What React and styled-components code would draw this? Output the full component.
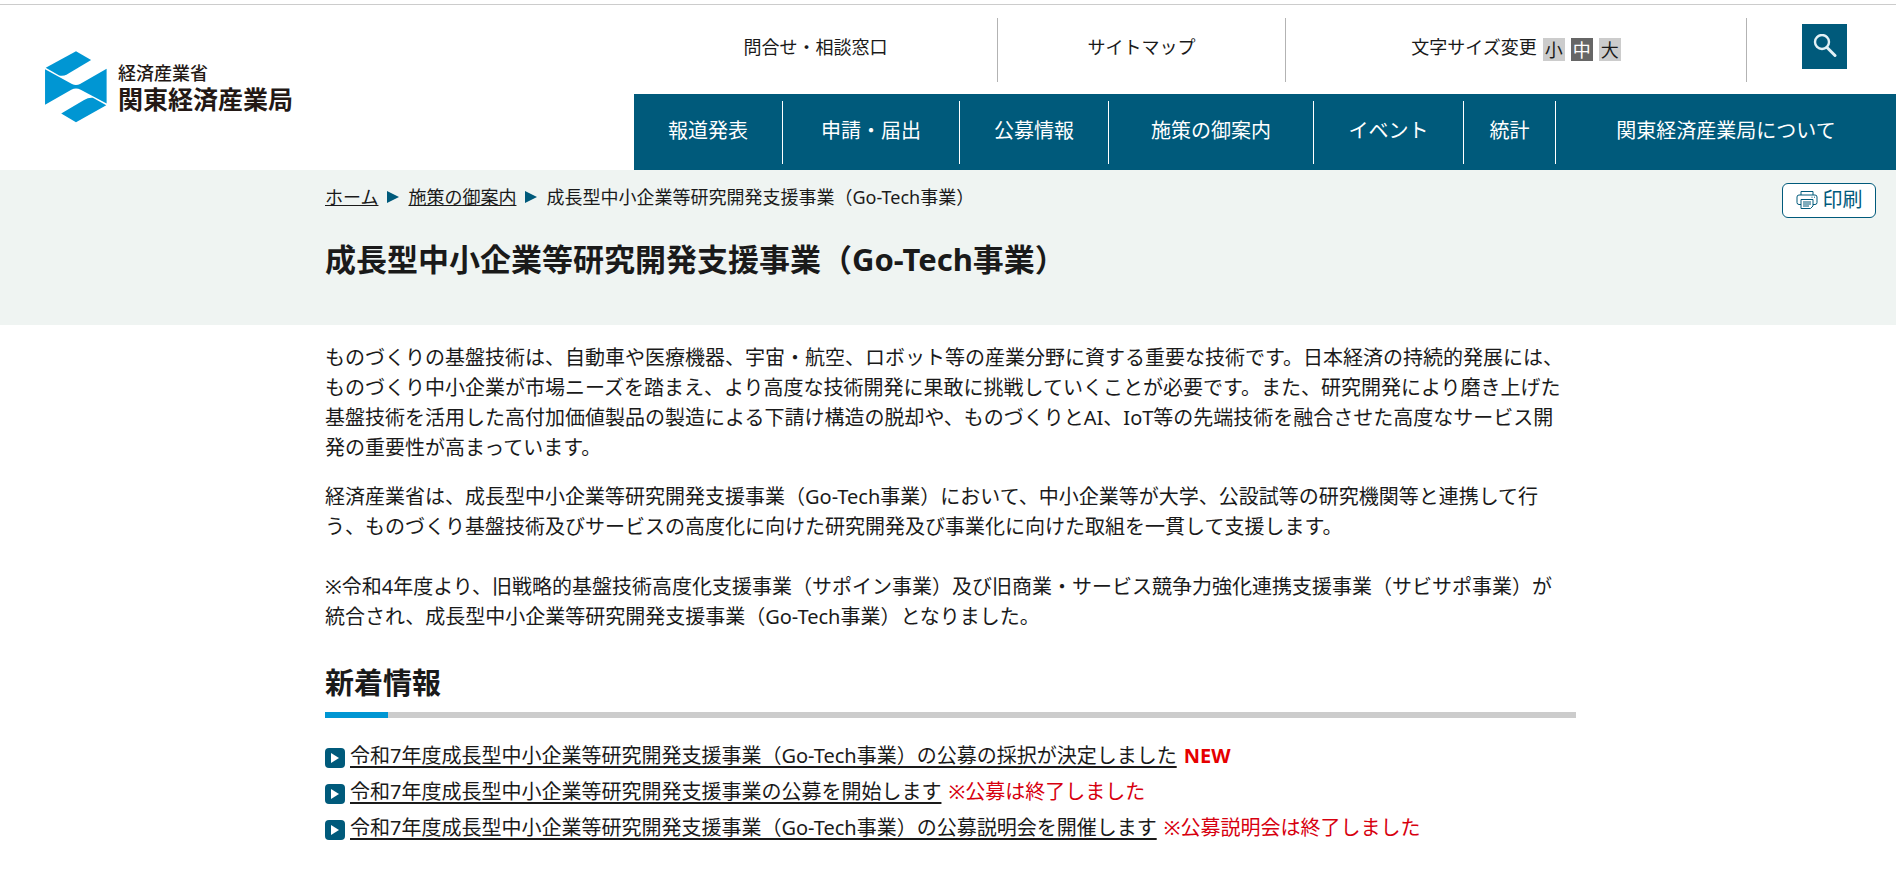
import React from 'react'
import styled, { createGlobalStyle } from 'styled-components';

const navItems = ['報道発表', '申請・届出', '公募情報', '施策の御案内', 'イベント', '統計', '関東経済産業局について'];

const sizes = [
    { label: '小' },
    { label: '中', active: true },
    { label: '大' },
];

const news = [
    { title: '令和7年度成長型中小企業等研究開発支援事業（Go-Tech事業）の公募の採択が決定しました', note: 'NEW', strong: true },
    { title: '令和7年度成長型中小企業等研究開発支援事業の公募を開始します', note: '※公募は終了しました' },
    { title: '令和7年度成長型中小企業等研究開発支援事業（Go-Tech事業）の公募説明会を開催します', note: '※公募説明会は終了しました' },
];

function LogoMark() {
    return (
        <svg width="62" height="72" viewBox="0 0 184 214" fill="#0096d3" aria-hidden="true">
            <path d="M2 50 L92 1 L137 27 L66 69 Q54 76 42 73 Z" />
            <path d="M0 54 L80 98 Q92 104 104 98 L183 53 L183 156 L106 115 Q92 108 78 115 L0 160 Z" />
            <path d="M182 161 L92 212 L48 186 L116 146 Q130 137 142 139 Z" />
        </svg>
    )
}

function SearchIcon() {
    return (
        <svg width="24" height="24" viewBox="0 0 24 24" fill="none" stroke="#e3f1f6" aria-hidden="true">
            <circle cx="9" cy="8" r="7" strokeWidth="2.4" />
            <path d="M14 13.5 L22 21.5" strokeWidth="3" strokeLinecap="round" />
        </svg>
    )
}

function PrinterIcon() {
    return (
        <svg width="22" height="20" viewBox="0 0 22 20" fill="none" stroke="#005a7b" aria-hidden="true">
            <path d="M5 5 V1.5 H17 V5" />
            <path d="M5 14.5 H3 Q1 14.5 1 12.5 V7 Q1 5 3 5 H19 Q21 5 21 7 V12.5 Q21 14.5 19 14.5 H17" />
            <path d="M5 18.5 V9.5 H17 V16 L14.5 18.5 Z" fill="#fff" />
            <path d="M7 12 H15 M7 14 H15 M7 16 H13 M15.5 7.2 H16.5 M18 7.2 H19" />
        </svg>
    )
}

function Header() {
    return (
        <HeaderWrapper>
            <Logo href="#">
                <LogoMark />
                <LogoText>
                    <small>経済産業省</small>
                    <strong>関東経済産業局</strong>
                </LogoText>
            </Logo>
            <Menus>
                <SubMenu>
                    <SubCell><a href="#contact">問合せ・相談窓口</a></SubCell>
                    <SubCell><a href="#sitemap">サイトマップ</a></SubCell>
                    <SubCell>
                        <span>文字サイズ変更</span>
                        {sizes.map((size) => (
                            <SizeButton key={size.label} type="button" $active={size.active}>{size.label}</SizeButton>
                        ))}
                    </SubCell>
                    <SubCell>
                        <SearchButton type="button" aria-label="検索"><SearchIcon /></SearchButton>
                    </SubCell>
                </SubMenu>
                <MainNav>
                    {navItems.map((item) => <a key={item} href="#nav">{item}</a>)}
                </MainNav>
            </Menus>
        </HeaderWrapper>
    )
}

export default function App() {
    return (
        <>
            <GlobalStyle />
            <Header />
            <TitleBand>
                <PrintButton type="button"><PrinterIcon />印刷</PrintButton>
                <Breadcrumb>
                    <a href="#home">ホーム</a>
                    <Arrow />
                    <a href="#policy">施策の御案内</a>
                    <Arrow />
                    <span>成長型中小企業等研究開発支援事業（Go-Tech事業）</span>
                </Breadcrumb>
                <h1>成長型中小企業等研究開発支援事業（Go-Tech事業）</h1>
            </TitleBand>
            <Content>
                <p>ものづくりの基盤技術は、自動車や医療機器、宇宙・航空、ロボット等の産業分野に資する重要な技術です。日本経済の持続的発展には、ものづくり中小企業が市場ニーズを踏まえ、より高度な技術開発に果敢に挑戦していくことが必要です。また、研究開発により磨き上げた基盤技術を活用した高付加価値製品の製造による下請け構造の脱却や、ものづくりとAI、IoT等の先端技術を融合させた高度なサービス開発の重要性が高まっています。</p>
                <p>
                    経済産業省は、成長型中小企業等研究開発支援事業（Go-Tech事業）において、中小企業等が大学、公設試等の研究機関等と連携して行う、ものづくり基盤技術及びサービスの高度化に向けた研究開発及び事業化に向けた取組を一貫して支援します。
                    <br /><br />
                    ※令和4年度より、旧戦略的基盤技術高度化支援事業（サポイン事業）及び旧商業・サービス競争力強化連携支援事業（サビサポ事業）が統合され、成長型中小企業等研究開発支援事業（Go-Tech事業）となりました。
                </p>
                <h2>新着情報</h2>
                <NewsList>
                    {news.map((item) => (
                        <li key={item.title}>
                            <Bullet />
                            <a href="#news">{item.title}</a>
                            <Note $strong={item.strong}>{item.note}</Note>
                        </li>
                    ))}
                </NewsList>
            </Content>
        </>
    )
}

const GlobalStyle = createGlobalStyle`
    *{
        box-sizing: border-box;
    }

    body{
        margin: 0;
        background-color: #fff;
        color: #1a1a1a;
        font-family: "Noto Sans", "Noto Sans CJK JP", sans-serif;
        font-size: 20px;
        line-height: 30px;
    }

    a{
        color: inherit;
    }

    button{
        font: inherit;
        cursor: pointer;
    }
`;

const HeaderWrapper = styled.header`
    display: grid;
    grid-template-columns: 634fr 1262fr;
    margin-top: 4px;
    border-top: 1px solid #ccc;
`;

const Logo = styled.a`
    display: flex;
    align-items: center;
    gap: 11px;
    padding: 0 0 2px 45px;
    text-decoration: none;
`;

const LogoText = styled.span`
    display: flex;
    flex-direction: column;
    color: #231815;

    small{
        font-size: 18px;
        line-height: 24px;
        font-weight: 500;
    }

    strong{
        font-size: 25px;
        line-height: 28px;
        font-weight: 700;
    }
`;

const Menus = styled.div`
    min-width: 0;
`;

const SubMenu = styled.div`
    display: grid;
    grid-template-columns: 364fr 288fr 461fr 149fr;
    padding: 13px 0 12px;
    font-size: 18px;
`;

const SubCell = styled.div`
    display: flex;
    align-items: center;
    justify-content: center;
    gap: 6px;
    height: 64px;
    padding-bottom: 6px;
    border-right: 1px solid #b3b3b3;

    &:last-child{
        padding: 0 0 8px 6px;
        border-right: 0;
    }

    a{
        text-decoration: none;
    }
`;

const SizeButton = styled.button`
    width: 22px;
    height: 23px;
    margin-top: 5px;
    padding: 0;
    border: 0;
    line-height: 20px;
    background-color: ${({ $active }) => ($active ? '#666' : '#ccc')};
    color: ${({ $active }) => ($active ? '#fff' : '#1a1a1a')};
`;

const SearchButton = styled.button`
    display: flex;
    align-items: center;
    justify-content: center;
    width: 45px;
    height: 45px;
    padding: 0;
    border: 0;
    background-color: #005a7b;
`;

const MainNav = styled.nav`
    display: grid;
    grid-template-columns: 149fr 177fr 149fr 205fr 150fr 92fr 340fr;
    padding: 7px 0 6px;
    background-color: #005a7b;

    a{
        padding: 15px 0 18px;
        border-right: 1px solid #fff;
        color: #fff;
        text-align: center;
        text-decoration: none;
        white-space: nowrap;

        &:last-child{
            border-right: 0;
        }
    }
`;

const TitleBand = styled.section`
    position: relative;
    padding: 12px 320px 43px 325px;
    background-color: #eff4f2;

    h1{
        margin: 24px 0 0;
        font-size: 31px;
        line-height: 46px;
    }
`;

const PrintButton = styled.button`
    position: absolute;
    top: 13px;
    right: 20px;
    display: flex;
    align-items: center;
    justify-content: center;
    gap: 5px;
    width: 94px;
    height: 35px;
    padding: 0 0 2px;
    border: 1px solid #005a7b;
    border-radius: 6px;
    background-color: #fff;
    color: #005a7b;
`;

const Breadcrumb = styled.nav`
    display: flex;
    align-items: center;
    font-size: 18px;
`;

const Arrow = styled.i`
    margin: 0 9px;
    border-style: solid;
    border-width: 6px 0 6px 12px;
    border-color: transparent transparent transparent #005a7b;
`;

const Content = styled.main`
    padding: 18px 320px 24px 325px;

    p{
        margin: 0 0 19px;
        padding-right: 10px;
    }

    h2{
        margin: 33px 0 20px;
        padding-bottom: 17px;
        background: linear-gradient(to right, #0096d3 5%, #ccc 5%) bottom / 100% 6px no-repeat;
        font-size: 29px;
        line-height: 36px;
    }
`;

const NewsList = styled.ul`
    margin: 0;
    padding: 0;
    list-style: none;

    li{
        display: flex;
        align-items: center;
        height: 36px;
    }

    a{
        text-decoration-thickness: 2px;
        text-underline-offset: 3px;
    }
`;

const Bullet = styled.i`
    display: flex;
    align-items: center;
    justify-content: center;
    width: 20px;
    height: 20px;
    margin: 3px 5px 0 0;
    border-radius: 4px;
    background-color: #005a7b;

    &::before{
        content: '';
        border-style: solid;
        border-width: 5px 0 5px 8px;
        border-color: transparent transparent transparent #fff;
    }
`;

const Note = styled.span`
    margin-left: 7px;
    color: ${({ $strong }) => ($strong ? '#e60000' : '#d7000f')};
    font-weight: ${({ $strong }) => ($strong ? 700 : 400)};
`;
